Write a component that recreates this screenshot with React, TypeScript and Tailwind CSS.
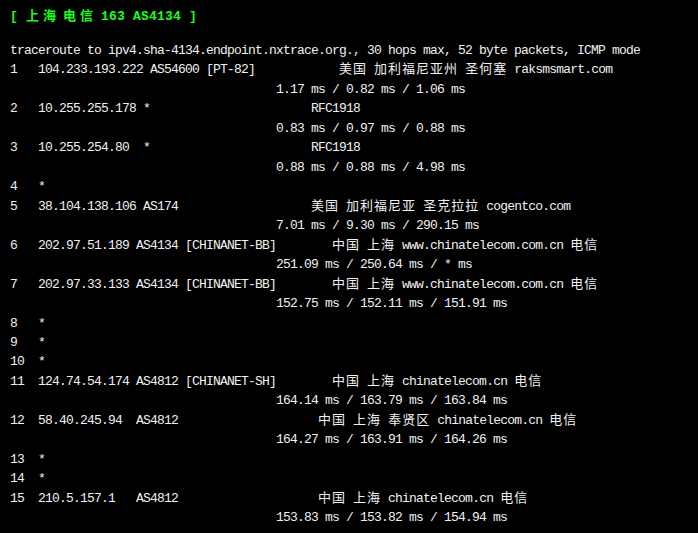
import React from 'react';

type Seg = [number, string];

const isWide = (c: string) => /[\u3000-\u9fff\uff00-\uffef]/.test(c);

const colWidth = (s: string) => Array.from(s).reduce((n, c) => n + (isWide(c) ? 2 : 1), 0);

// put each piece of text at its terminal column
const place = (segs: Seg[]) => {
  let out = '';
  segs.forEach(([col, text]) => {
    const w = colWidth(out);
    out += ' '.repeat(Math.max(col - w, w > 0 ? 1 : 0)) + text;
  });
  return out;
};

const splitRuns = (s: string) => {
  const runs: { wide: boolean; text: string }[] = [];
  Array.from(s).forEach((c) => {
    const wide = isWide(c);
    const last = runs[runs.length - 1];
    if (last && last.wide === wide) last.text += c;
    else runs.push({ wide, text: c });
  });
  return runs;
};

const Line = ({ text }: { text: string }) => (
  <div className="h-[19.48px] whitespace-pre">
    {splitRuns(text).map((r, i) =>
      r.wide ? (
        <span
          key={i}
          className="font-['Noto_Sans_CJK_SC',sans-serif] text-[13px] leading-[10px] tracking-[1px]"
        >
          {r.text}
        </span>
      ) : (
        <span key={i}>{r.text}</span>
      )
    )}
  </div>
);

const ms = (a: string) => place([[38, a]]);

const lines: string[] = [
  'traceroute to ipv4.sha-4134.endpoint.nxtrace.org., 30 hops max, 52 byte packets, ICMP mode',
  place([[0, '1'], [4, '104.233.193.222 AS54600 [PT-82]'], [47, '美国 加利福尼亚州 圣何塞 raksmsmart.com']]),
  ms('1.17 ms / 0.82 ms / 1.06 ms'),
  place([[0, '2'], [4, '10.255.255.178 *'], [43, 'RFC1918']]),
  ms('0.83 ms / 0.97 ms / 0.88 ms'),
  place([[0, '3'], [4, '10.255.254.80  *'], [43, 'RFC1918']]),
  ms('0.88 ms / 0.88 ms / 4.98 ms'),
  place([[0, '4'], [4, '*']]),
  place([[0, '5'], [4, '38.104.138.106 AS174'], [43, '美国 加利福尼亚 圣克拉拉 cogentco.com']]),
  ms('7.01 ms / 9.30 ms / 290.15 ms'),
  place([[0, '6'], [4, '202.97.51.189 AS4134 [CHINANET-BB]'], [46, '中国 上海 www.chinatelecom.com.cn 电信']]),
  ms('251.09 ms / 250.64 ms / * ms'),
  place([[0, '7'], [4, '202.97.33.133 AS4134 [CHINANET-BB]'], [46, '中国 上海 www.chinatelecom.com.cn 电信']]),
  ms('152.75 ms / 152.11 ms / 151.91 ms'),
  place([[0, '8'], [4, '*']]),
  place([[0, '9'], [4, '*']]),
  place([[0, '10'], [4, '*']]),
  place([[0, '11'], [4, '124.74.54.174 AS4812 [CHINANET-SH]'], [46, '中国 上海 chinatelecom.cn 电信']]),
  ms('164.14 ms / 163.79 ms / 163.84 ms'),
  place([[0, '12'], [4, '58.40.245.94  AS4812'], [44, '中国 上海 奉贤区 chinatelecom.cn 电信']]),
  ms('164.27 ms / 163.91 ms / 164.26 ms'),
  place([[0, '13'], [4, '*']]),
  place([[0, '14'], [4, '*']]),
  place([[0, '15'], [4, '210.5.157.1   AS4812'], [44, '中国 上海 chinatelecom.cn 电信']]),
  ms('153.83 ms / 153.82 ms / 154.94 ms'),
];

const Wide = ({ children }: { children: React.ReactNode }) => (
  <span className="font-['Noto_Sans_CJK_SC',sans-serif] text-[13px] leading-[10px] tracking-[4px]">
    {children}
  </span>
);

export default function App() {
  return (
    <div className="min-h-screen w-full bg-black pt-[7px] pl-[10px] font-['Liberation_Mono',monospace] text-[13px] leading-[19.48px] tracking-[-0.8px] text-[#f0f0f0]">
      {/* header */}
      <div className="mb-[14.5px] h-[19.48px] whitespace-pre font-bold tracking-[0.2px] text-[#1aff1a]">
        {'[ '}
        <Wide>上海</Wide>
        <span className="inline-block w-[3px]" />
        <Wide>电信</Wide>
        <span className="inline-block w-[4px]" />
        {'163 AS4134 ]'}
      </div>

      {lines.map((l, i) => (
        <Line key={i} text={l} />
      ))}
    </div>
  );
}
